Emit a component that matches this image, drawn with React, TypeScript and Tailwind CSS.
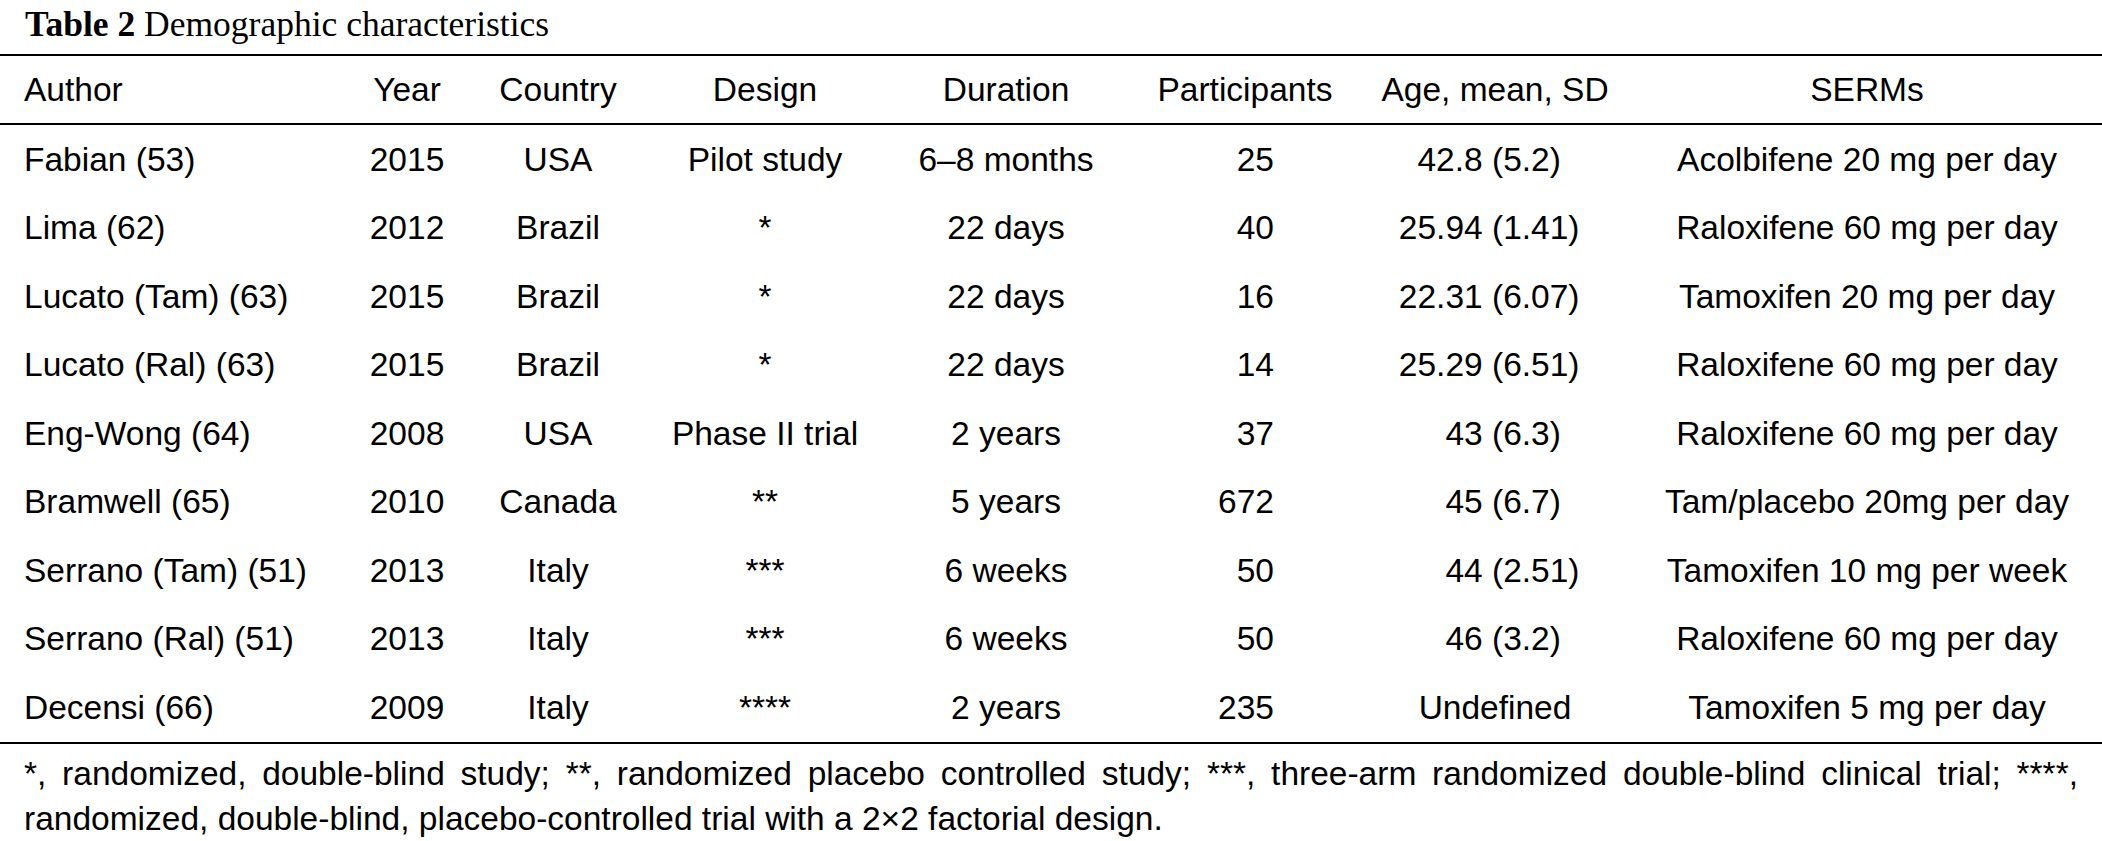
type Row = {
  author: string;
  year: string;
  country: string;
  design: string;
  duration: string;
  participants: string;
  age: [string, string] | string;
  serms: string;
};

const ROWS: Row[] = [
  { author: "Fabian (53)", year: "2015", country: "USA", design: "Pilot study", duration: "6–8 months", participants: "25", age: ["42.8", "(5.2)"], serms: "Acolbifene 20 mg per day" },
  { author: "Lima (62)", year: "2012", country: "Brazil", design: "*", duration: "22 days", participants: "40", age: ["25.94", "(1.41)"], serms: "Raloxifene 60 mg per day" },
  { author: "Lucato (Tam) (63)", year: "2015", country: "Brazil", design: "*", duration: "22 days", participants: "16", age: ["22.31", "(6.07)"], serms: "Tamoxifen 20 mg per day" },
  { author: "Lucato (Ral) (63)", year: "2015", country: "Brazil", design: "*", duration: "22 days", participants: "14", age: ["25.29", "(6.51)"], serms: "Raloxifene 60 mg per day" },
  { author: "Eng-Wong (64)", year: "2008", country: "USA", design: "Phase II trial", duration: "2 years", participants: "37", age: ["43", "(6.3)"], serms: "Raloxifene 60 mg per day" },
  { author: "Bramwell (65)", year: "2010", country: "Canada", design: "**", duration: "5 years", participants: "672", age: ["45", "(6.7)"], serms: "Tam/placebo 20mg per day" },
  { author: "Serrano (Tam) (51)", year: "2013", country: "Italy", design: "***", duration: "6 weeks", participants: "50", age: ["44", "(2.51)"], serms: "Tamoxifen 10 mg per week" },
  { author: "Serrano (Ral) (51)", year: "2013", country: "Italy", design: "***", duration: "6 weeks", participants: "50", age: ["46", "(3.2)"], serms: "Raloxifene 60 mg per day" },
  { author: "Decensi (66)", year: "2009", country: "Italy", design: "****", duration: "2 years", participants: "235", age: "Undefined", serms: "Tamoxifen 5 mg per day" },
];

const COLS = "grid grid-cols-[330px_154px_148px_266px_216px_262px_238px_1fr] items-center";

export default function App() {
  return (
    <div className="w-[2102px] bg-white text-black font-['Liberation_Sans',Arial,sans-serif] text-[33.5px]">
      <div className="h-[54px] pl-[25px] font-['Liberation_Serif','Times_New_Roman',serif] text-[35.5px] leading-[48px]">
        <span className="font-bold">Table 2</span> Demographic characteristics
      </div>

      <div className="border-t-2 border-black">
        <div className={`${COLS} h-[67px] leading-none`}>
          <div className="pl-[24px]">Author</div>
          <div className="text-center">Year</div>
          <div className="text-center">Country</div>
          <div className="text-center">Design</div>
          <div className="text-center">Duration</div>
          <div className="text-center">Participants</div>
          <div className="text-center">Age, mean, SD</div>
          <div className="pl-[18px] text-center">SERMs</div>
        </div>

        <div className="border-t-2 border-black">
          {ROWS.map((r) => (
            <div key={r.author} className={`${COLS} h-[68.5px] leading-none`}>
              <div className="pl-[24px] whitespace-nowrap">{r.author}</div>
              <div className="text-center">{r.year}</div>
              <div className="text-center">{r.country}</div>
              <div className="text-center">{r.design}</div>
              <div className="text-center">{r.duration}</div>
              <div className="pr-[102px] text-right">{r.participants}</div>
              {typeof r.age === "string" ? (
                <div className="text-center">{r.age}</div>
              ) : (
                <div className="flex whitespace-nowrap">
                  <span className="w-[116px] text-right">{r.age[0]}&nbsp;</span>
                  <span>{r.age[1]}</span>
                </div>
              )}
              <div className="pl-[18px] text-center whitespace-nowrap">{r.serms}</div>
            </div>
          ))}
        </div>
      </div>

      <div className="border-t-2 border-black px-[24px] pt-[7px] pb-[10px] text-justify leading-[45px]">
        *, randomized, double-blind study; **, randomized placebo controlled study; ***, three-arm randomized double-blind clinical trial; ****, randomized, double-blind, placebo-controlled trial with a 2×2 factorial design.
      </div>
    </div>
  );
}
